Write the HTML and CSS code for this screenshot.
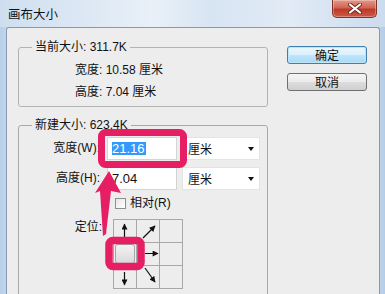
FILE: index.html
```html
<!DOCTYPE html>
<html lang="zh">
<head>
<meta charset="utf-8">
<title>画布大小</title>
<link rel="stylesheet" href="styles.css">
</head>
<body>
<svg class="defs" width="0" height="0" aria-hidden="true">
  <defs>
    <marker id="ah" viewBox="0 0 10 10" refX="9" refY="5" markerWidth="7" markerHeight="6" markerUnits="userSpaceOnUse" orient="auto">
      <path d="M0,0 L10,5 L0,10 z" fill="#111"/>
    </marker>
  </defs>
</svg>
<div class="window">
  <div class="titlebar">
    <span class="title">画布大小</span>
    <div class="close">
      <svg width="14" height="11" viewBox="0 0 14 11"><path d="M2,1.5 L12,9.5 M12,1.5 L2,9.5" stroke="#6a2a22" stroke-width="4" stroke-linecap="round"/><path d="M2,1.5 L12,9.5 M12,1.5 L2,9.5" stroke="#fff" stroke-width="2.2" stroke-linecap="round"/></svg>
    </div>
  </div>
  <div class="client">
    <div class="main">
      <fieldset class="group">
        <legend>当前大小: 311.7K</legend>
        <div class="info">
          <div class="line">宽度: 10.58 厘米</div>
          <div class="line">高度: 7.04 厘米</div>
        </div>
      </fieldset>
      <fieldset class="group group-new">
        <legend>新建大小: 623.4K</legend>
        <div class="form">
          <div class="row">
            <span class="lbl">宽度(W):</span>
            <div class="field"><span class="sel">21.16</span></div>
            <div class="dropdown"><span>厘米</span><i class="caret"></i></div>
          </div>
          <div class="row">
            <span class="lbl">高度(H):</span>
            <div class="field"><span>7.04</span></div>
            <div class="dropdown"><span>厘米</span><i class="caret"></i></div>
          </div>
          <div class="check-row">
            <span class="checkbox"></span>
            <span class="check-label">相对(R)</span>
          </div>
          <div class="anchor-row">
            <span class="anchor-lbl">定位:</span>
            <div class="anchor-grid">
              <div class="cell"><svg width="22" height="22"><line x1="10.5" y1="18" x2="10.5" y2="4" stroke="#111" stroke-width="1.2" marker-end="url(#ah)"/></svg></div>
              <div class="cell"><svg width="22" height="22"><line x1="6" y1="18" x2="18" y2="6" stroke="#111" stroke-width="1.2" marker-end="url(#ah)"/></svg></div>
              <div class="cell"></div>
              <div class="cell"><span class="anchor-btn"></span></div>
              <div class="cell"><svg width="22" height="22"><line x1="8" y1="10.5" x2="21" y2="10.5" stroke="#111" stroke-width="1.2" marker-end="url(#ah)"/></svg></div>
              <div class="cell"></div>
              <div class="cell"><svg width="22" height="22"><line x1="10.5" y1="6" x2="10.5" y2="19" stroke="#111" stroke-width="1.2" marker-end="url(#ah)"/></svg></div>
              <div class="cell"><svg width="22" height="22"><line x1="8" y1="2" x2="18" y2="16" stroke="#111" stroke-width="1.2" marker-end="url(#ah)"/></svg></div>
              <div class="cell"></div>
            </div>
          </div>
        </div>
      </fieldset>
    </div>
    <div class="buttons">
      <div class="btn btn-default">确定</div>
      <div class="btn">取消</div>
    </div>
  </div>
</div>
<svg class="annot" width="385" height="294" viewBox="0 0 385 294" aria-hidden="true">
  <rect x="101.5" y="132.5" width="82" height="32" rx="4" fill="none" stroke="#e61e63" stroke-width="7"/>
  <rect x="109" y="240.5" width="32" height="26" rx="4" fill="none" stroke="#e61e63" stroke-width="7.5"/>
  <polygon points="109,171 121,193 111,191 106,234 103,236 100,191 95,193" fill="#e61e63"/>
</svg>
</body>
</html>
```

FILE: styles.css
```css
* { box-sizing: border-box; }
html, body {
  margin: 0;
  padding: 0;
}
body {
  width: 385px;
  height: 294px;
  overflow: hidden;
  position: relative;
  font-family: "Liberation Sans", "Noto Sans CJK SC", sans-serif;
  font-size: 12px;
  color: #111;
  background: #bcd3eb;
}
.defs { position: absolute; width: 0; height: 0; }
.window {
  display: flex;
  flex-direction: column;
  height: 294px;
  overflow: hidden;
  background: linear-gradient(to right, #b9d0e9 0, #c3d7ec 2%, #c3d7ec 98%, #b4cce6 100%);
}
.titlebar {
  height: 27px;
  flex: none;
  display: flex;
  justify-content: space-between;
  align-items: flex-start;
  padding-left: 8px;
  padding-right: 8px;
  background: linear-gradient(to right, #cfdeef 0%, #dbe7f4 20%, #e9f0f8 40%, #d7e4f2 55%, #e2ebf6 75%, #cbdcee 100%);
}
.title {
  padding-top: 6px;
  line-height: 16px;
  font-size: 12.5px;
  font-family: "Noto Sans CJK SC", sans-serif;
  color: #111;
}
.close {
  width: 45px;
  height: 18px;
  border: 1px solid #7e3428;
  border-top: none;
  border-radius: 0 0 5px 5px;
  background: linear-gradient(to bottom, #e49888 0%, #d26552 45%, #bc3a28 55%, #cc5a47 100%);
  display: flex;
  align-items: center;
  justify-content: center;
  box-shadow: inset 0 0 0 1px rgba(255,255,255,0.3);
}
.client {
  flex: 1;
  min-height: 0;
  overflow: hidden;
  display: flex;
  margin: 0 5px 0 6px;
  padding: 12px 0 0 11px;
  border: 1px solid #8898ad;
  border-bottom: none;
  border-radius: 3px 3px 0 0;
  background: #ededed;
}
.main {
  width: 250px;
  flex: none;
}
.group {
  margin: 0;
  padding: 0;
  min-width: 0;
  width: 250px;
  border: 1px solid #b3b3b3;
  border-radius: 3px;
}
.group legend {
  margin-left: 13px;
  padding: 0 3px;
  line-height: 14px;
  font-size: 12px;
}
.info {
  padding: 5px 0 3px 56px;
}
.line {
  line-height: 22px;
}
.group-new {
  margin-top: 11px;
  height: 180px;
  border-color: #a9a9a9;
}
.form {
  padding-top: 5px;
  display: flex;
  flex-direction: column;
}
.row {
  display: flex;
  align-items: center;
  height: 23px;
}
.row + .row { margin-top: 7px; }
.lbl {
  width: 81px;
  text-align: right;
  line-height: 23px;
}
.field {
  width: 70px;
  height: 23px;
  margin-left: 7px;
  background: #fff;
  border: 1px solid #d4d4d4;
  padding-left: 4px;
  display: flex;
  align-items: center;
  font-size: 13px;
}
.field span { line-height: 13px; }
.sel {
  background: #3399ff;
  color: #fff;
  padding: 0 1px 0 0;
}
.dropdown {
  width: 78px;
  height: 23px;
  margin-left: 5px;
  background: #fff;
  border: 1px solid #e4e4e4;
  padding: 0 5px 0 5px;
  display: flex;
  align-items: center;
  justify-content: space-between;
}
.caret {
  width: 0;
  height: 0;
  border-left: 3.5px solid transparent;
  border-right: 3.5px solid transparent;
  border-top: 4px solid #111;
}
.check-row {
  display: flex;
  align-items: center;
  height: 16px;
  margin-top: 5px;
  margin-left: 96px;
}
.checkbox {
  width: 11px;
  height: 11px;
  border: 1px solid #8e8f8f;
  background: linear-gradient(135deg, #e6e6e6, #ffffff);
}
.check-label {
  margin-left: 4px;
  line-height: 16px;
}
.anchor-row {
  display: flex;
  align-items: flex-start;
  margin-top: 8px;
}
.anchor-lbl {
  width: 83px;
  text-align: right;
  line-height: 16px;
}
.anchor-grid {
  margin-left: 11px;
  display: grid;
  grid-template-columns: repeat(3, 23px);
  grid-template-rows: repeat(3, 23px);
  border-top: 1px solid #a7a7a7;
  border-left: 1px solid #a7a7a7;
}
.cell {
  border-right: 1px solid #a7a7a7;
  border-bottom: 1px solid #a7a7a7;
  display: flex;
  padding: 0;
}
.cell svg { display: block; }
.anchor-btn {
  flex: 1;
  margin: 1px;
  border: 1px solid #a5a5a5;
  border-radius: 3px;
  background: linear-gradient(to bottom, #f3f3f3, #d9d9d9);
}
.buttons {
  margin-left: 19px;
  margin-top: 6px;
  display: flex;
  flex-direction: column;
  gap: 9px;
}
.btn {
  width: 80px;
  height: 18px;
  border: 1px solid #707070;
  border-radius: 3px;
  background: linear-gradient(to bottom, #f4f4f4 0%, #ebebeb 50%, #dddddd 51%, #cfcfcf 100%);
  text-align: center;
  line-height: 16px;
  font-size: 12px;
  font-family: "Noto Sans CJK SC", sans-serif;
}
.btn-default {
  border-color: #3c7fb1;
  background: linear-gradient(to bottom, #eaf6fd 0%, #d9f0fc 50%, #bee6fd 51%, #a7d9f5 100%);
  box-shadow: inset 0 0 0 1px #c0e5f8;
}
.annot {
  position: absolute;
  left: 0;
  top: 0;
  pointer-events: none;
}
```
